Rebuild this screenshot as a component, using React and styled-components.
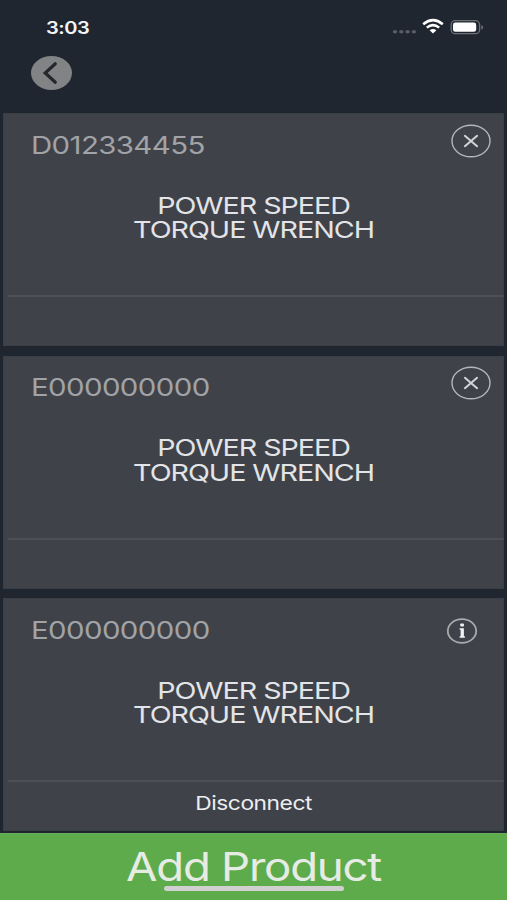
import React from "react";
import styled, { createGlobalStyle } from "styled-components";

const GlobalStyle = createGlobalStyle`
  * {
    box-sizing: border-box;
  }
  body {
    margin: 0;
    background: #20262f;
    font-family: Inter, "Liberation Sans", sans-serif;
  }
`;

const Screen = styled.div`
  width: 507px;
  height: 900px;
  display: flex;
  flex-direction: column;
  overflow: hidden;
  background: #20262f;
`;

const StatusBar = styled.div`
  height: 54px;
  display: flex;
  justify-content: space-between;
  padding: 0 23px 0 46px;
`;

const Time = styled.div`
  font-size: 17px;
  line-height: 20px;
  font-weight: 600;
  letter-spacing: -0.4px;
  color: #f4f6f8;
  margin-top: 18px;
  transform: scaleX(1.18);
  transform-origin: left;
`;

const StatusIcons = styled.svg`
  width: 92px;
  height: 20px;
  margin-top: 17px;
`;

const Header = styled.div`
  height: 59px;
  padding: 2px 31px;
`;

const BackButton = styled.button`
  display: block;
  width: 41px;
  height: 34px;
  padding: 0;
  border: none;
  border-radius: 50%;
  background: #818385;
`;

const CardList = styled.div`
  display: flex;
  flex-direction: column;
  gap: 9.5px;
  height: 720px;
  padding: 0 3px;
`;

const Card = styled.div`
  height: 233px;
  flex: none;
  display: flex;
  flex-direction: column;
  background: #3f4249;
  border: 1px solid #3a3e45;
`;

const CardTop = styled.div`
  height: 80.3px;
  display: flex;
  justify-content: space-between;
  padding: 0 ${({ $info }) => ($info ? "25px" : "12px")} 0 27px;
`;

const Serial = styled.div`
  height: 30px;
  margin-top: 15.6px;
  font-size: 24.5px;
  line-height: 30px;
  letter-spacing: -0.5px;
  color: #a1a3a7;
  transform: scaleX(1.2);
  transform-origin: left;
`;

const IconButton = styled.button`
  height: ${({ $info }) => ($info ? "26px" : "34px")};
  margin-top: ${({ $info }) => ($info ? "18.6px" : "9.6px")};
  padding: 0;
  border: none;
  background: none;
`;

const ProductName = styled.div`
  height: 101.7px;
  font-size: 23.5px;
  line-height: 24.4px;
  letter-spacing: -0.85px;
  text-align: center;
  color: #e2e4e7;
  transform: scaleX(1.22);
`;

const CardFooter = styled.div`
  height: 50px;
  margin: 0 -1px 0 4px;
  padding-right: 5px;
  border-top: 2px solid #4c4f55;
  display: flex;
  justify-content: center;
`;

const FooterAction = styled.div`
  margin-top: 10px;
  font-size: 19px;
  line-height: 24px;
  letter-spacing: -0.4px;
  color: #eceef0;
  transform: scaleX(1.2);
`;

const AddButton = styled.button`
  position: relative;
  height: 67px;
  flex: none;
  padding: 0;
  border: none;
  border-top: 1px solid #6aac5d;
  background: #5eab4b;
  font-family: inherit;
  color: #e7ebe5;
`;

const AddLabel = styled.div`
  font-size: 39px;
  line-height: 48px;
  letter-spacing: -1.1px;
  margin-top: -1px;
  transform: scaleX(1.17);
`;

const HomeIndicator = styled.div`
  position: absolute;
  left: 164px;
  bottom: 9px;
  width: 180px;
  height: 5px;
  border-radius: 3px;
  background: #cfd0cf;
`;

const products = [
  { serial: "D012334455" },
  { serial: "E000000000" },
  { serial: "E000000000", connected: true },
];

const CloseIcon = () => (
  <svg width="40" height="34" viewBox="0 0 40 34" fill="none">
    <ellipse cx="20" cy="17" rx="19" ry="15.8" stroke="#b4b6b9" strokeWidth="1.4" />
    <path d="M13.9 11.8L26.1 22.2M26.1 11.8L13.9 22.2" stroke="#d4d5d7" strokeWidth="2" strokeLinecap="round" />
  </svg>
);

const InfoIcon = () => (
  <svg width="32" height="26" viewBox="0 0 32 26" fill="none">
    <ellipse cx="16" cy="13" rx="14.2" ry="11.8" stroke="#a9abae" strokeWidth="1.8" />
    <path d="M13.6 10.2h4.3v8.1h1v1.5h-5.3v-1.5h1v-6.6h-1z" fill="#f0f1f2" />
    <rect x="14.2" y="5.4" width="3.8" height="3.2" rx="1" fill="#f0f1f2" />
  </svg>
);

const ProductCard = ({ product }) => (
  <Card>
    <CardTop $info={product.connected}>
      <Serial>{product.serial}</Serial>
      <IconButton $info={product.connected}>
        {product.connected ? <InfoIcon /> : <CloseIcon />}
      </IconButton>
    </CardTop>
    <ProductName>
      POWER SPEED
      <br />
      TORQUE WRENCH
    </ProductName>
    <CardFooter>
      {product.connected && <FooterAction>Disconnect</FooterAction>}
    </CardFooter>
  </Card>
);

const App = () => {
  return (
    <>
      <GlobalStyle />
      <Screen>
        <StatusBar>
          <Time>3:03</Time>
          <StatusIcons viewBox="0 0 92 20" fill="none">
            {/* Signal dots */}
            {[3, 9.3, 15.6, 21.9].map((x) => (
              <ellipse key={x} cx={x} cy="14.8" rx="2.2" ry="1.8" fill="#595e66" />
            ))}
            {/* Wifi */}
            <path d="M31.2 7.2Q41 -.8 50.8 7.2" stroke="#fff" strokeWidth="2.6" />
            <path d="M34.8 10.6Q41 5.6 47.2 10.6" stroke="#fff" strokeWidth="2.5" />
            <path d="M37.6 13.2Q41 10.6 44.4 13.2L41 16.4Z" fill="#fff" />
            {/* Battery */}
            <rect x="59.2" y="3.7" width="28.4" height="13" rx="4" stroke="#6b7077" strokeWidth="1.3" />
            <rect x="61" y="5.6" width="23.2" height="9.2" rx="2.4" fill="#fff" />
            <path d="M89.3 8.2c2.4.6 2.4 3.8 0 4.4z" fill="#6b7077" />
          </StatusIcons>
        </StatusBar>
        <Header>
          <BackButton>
            <svg width="41" height="34" viewBox="0 0 41 34" fill="none">
              <path d="M24.3 7.8L14.2 17L24.3 26.2" stroke="#24282d" strokeWidth="3.2" strokeLinecap="round" />
            </svg>
          </BackButton>
        </Header>
        <CardList>
          {products.map((product, index) => (
            <ProductCard key={index} product={product} />
          ))}
        </CardList>
        <AddButton>
          <AddLabel>Add Product</AddLabel>
          <HomeIndicator />
        </AddButton>
      </Screen>
    </>
  );
};

export default App;
